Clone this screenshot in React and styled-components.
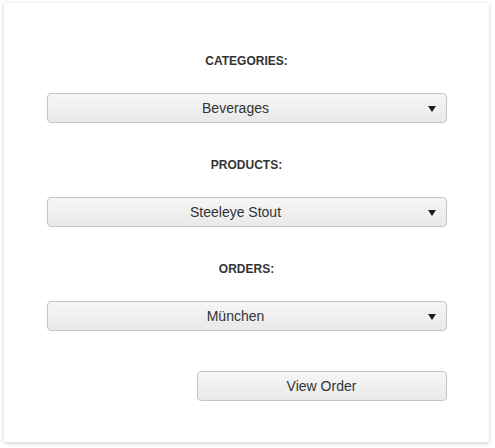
import React, { useState } from 'react';
import styled, { createGlobalStyle } from 'styled-components';

const GlobalStyle = createGlobalStyle`
  html, body {
    margin: 0;
    padding: 0;
    background: #ffffff;
    font-family: "Liberation Sans", Arial, sans-serif;
  }
`;

const Page = styled.div`
  padding: 3px 6px 6px 4px;
`;

const Card = styled.div`
  box-sizing: border-box;
  width: 485px;
  height: 439px;
  background: #ffffff;
  box-shadow: 0 1px 4px rgba(0, 0, 0, 0.22);
  padding-top: 50px;
  display: flex;
  flex-direction: column;
  align-items: center;
`;

const Section = styled.div`
  display: flex;
  flex-direction: column;
  align-items: center;
  margin-bottom: 34px;
`;

const Label = styled.div`
  font-size: 12px;
  line-height: 16px;
  font-weight: bold;
  color: #333333;
  margin-bottom: 24px;
`;

const DropDown = styled.div`
  box-sizing: border-box;
  position: relative;
  width: 400px;
  height: 30px;
  padding-right: 22px;
  border: 1px solid #c5c5c5;
  border-radius: 4px;
  background: linear-gradient(to bottom, #f6f6f6 0%, #e9e9e9 100%);
  display: flex;
  align-items: center;
  justify-content: center;
  font-size: 14px;
  color: #333333;
  cursor: pointer;
`;

const Arrow = styled.span`
  position: absolute;
  right: 10px;
  top: 12px;
  width: 0;
  height: 0;
  border-left: 4px solid transparent;
  border-right: 4px solid transparent;
  border-top: 6px solid #1a1a1a;
`;

const ButtonRow = styled.div`
  width: 400px;
  display: flex;
  justify-content: flex-end;
  margin-top: 6px;
`;

const Button = styled.button`
  box-sizing: border-box;
  width: 250px;
  height: 30px;
  border: 1px solid #c5c5c5;
  border-radius: 4px;
  background: linear-gradient(to bottom, #f6f6f6 0%, #e9e9e9 100%);
  font-family: "Liberation Sans", Arial, sans-serif;
  font-size: 14px;
  color: #333333;
  cursor: pointer;
  padding: 0;
`;

const fields = [
  { label: 'CATEGORIES:', value: 'Beverages' },
  { label: 'PRODUCTS:', value: 'Steeleye Stout' },
  { label: 'ORDERS:', value: 'München' }
];

const App = () => {
  const [values] = useState(fields);

  return (
    <Page>
      <GlobalStyle />
      <Card>
        {values.map(field => (
          <Section key={field.label}>
            <Label>{field.label}</Label>
            <DropDown>
              {field.value}
              <Arrow />
            </DropDown>
          </Section>
        ))}
        <ButtonRow>
          <Button>View Order</Button>
        </ButtonRow>
      </Card>
    </Page>
  );
};

export default App;
